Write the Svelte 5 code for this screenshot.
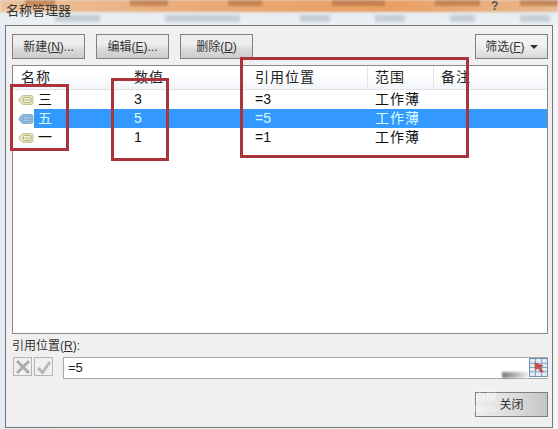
<script>
  const rows = [
    { name: '三', value: '3', ref: '=3', scope: '工作薄', sel: false },
    { name: '五', value: '5', ref: '=5', scope: '工作薄', sel: true },
    { name: '一', value: '1', ref: '=1', scope: '工作薄', sel: false }
  ];
  const topBlots = [[25, 40], [75, 50], [60, 45], [70, 70], [50, 60], [40, 50]];
  const lowBlots = [[55, 45], [65, 75], [60, 30], [45, 30], [45, 25], [45, 30]];
</script>

<div class="window">
  <div class="glass">
    <div class="orange">
      {#each topBlots as b}
        <span class="blot" style="margin-left:{b[0]}px;width:{b[1]}px"></span>
      {/each}
    </div>
    <div class="low">
      {#each lowBlots as b}
        <span class="lowblot" style="margin-left:{b[0]}px;width:{b[1]}px"></span>
      {/each}
    </div>
    <div class="title">名称管理器</div>
    <div class="help">?</div>
  </div>

  <div class="panel">
    <div class="toolbar">
      <button class="btn">新建(<u>N</u>)...</button>
      <button class="btn">编辑(<u>E</u>)...</button>
      <button class="btn">删除(<u>D</u>)</button>
      <button class="btn filter">筛选(<u>F</u>) <span class="caret"></span></button>
    </div>

    <div class="list">
      <div class="head row">
        <span class="c1">名称</span>
        <span>数值</span>
        <span class="ref">引用位置</span>
        <span class="div">范围</span>
        <span class="div">备注</span>
        <span></span>
      </div>
      {#each rows as r}
        <div class="row item">
          <span class="namecell">
            <svg class="tag" viewBox="0 0 16 12" width="16" height="12">
              <path d="M1 6 Q1 5 2 4 L4 2 Q4.6 1.5 6 1.5 H13 Q15 1.5 15 3.5 V8.5 Q15 10.5 13 10.5 H6 Q4.6 10.5 4 10 L2 8 Q1 7 1 6 Z"
                fill={r.sel ? '#8fbcdf' : '#e8e6b4'} stroke={r.sel ? '#86aecb' : '#c4c296'} />
              <rect x="5.5" y="3.5" width="7.5" height="5" rx="1" fill={r.sel ? '#a9cde8' : '#f6f5d8'} stroke={r.sel ? '#6f9cc4' : '#9c9a6a'} stroke-width="0.7" />
              <path d="M6.5 6 H12" stroke={r.sel ? '#5f8fb8' : '#9c9a6a'} stroke-width="0.8" />
            </svg>
            <span class="nm" class:sel={r.sel}>{r.name}</span>
          </span>
          <span class:sel={r.sel} class="latin">{r.value}</span>
          <span class:sel={r.sel} class="latin ref">{r.ref}</span>
          <span class:sel={r.sel} class="scope">{r.scope}</span>
          <span class:sel={r.sel}></span>
          <span class:sel={r.sel}></span>
        </div>
      {/each}
    </div>

    <div class="label">引用位置(<u>R</u>):</div>

    <div class="refbar">
      <span class="sq">
        <svg viewBox="0 0 18 18" width="18" height="18"><path d="M3 3 L15 15 M15 3 L3 15" stroke="#adadad" stroke-width="3" /></svg>
      </span>
      <span class="sq">
        <svg viewBox="0 0 18 18" width="18" height="18"><path d="M3 10 L7.5 14.5 L15 4" stroke="#b8b8b8" stroke-width="3" fill="none" /></svg>
      </span>
      <div class="input">
        <span class="val">=5</span>
        <span class="smudge"></span>
        <span class="picker">
          <svg viewBox="0 0 18 18" width="19" height="19">
            <rect x="0.5" y="0.5" width="17" height="17" fill="#e4edf5" stroke="#6f93b3" />
            <path d="M1 5 H17 M1 9 H17 M1 13 H17 M6 1 V17 M12 1 V17" stroke="#7fa2c0" stroke-width="1" />
            <path d="M5 4 L14 7 L11 9 L14 13 L11 14 L8.5 10 L6 12 Z" fill="#c0504d" />
          </svg>
        </span>
      </div>
    </div>

    <div class="footer">
      <button class="btn close">关闭</button>
    </div>
  </div>

  <div class="mark a"></div>
  <div class="mark b"></div>
  <div class="mark c"></div>
  <div class="wm wm1">百度</div>
  <div class="wm wm2">baidu</div>
</div>

<style>
  :global(body) {
    margin: 0;
    background: #fff;
  }
  .window {
    position: relative;
    width: 558px;
    height: 429px;
    overflow: hidden;
    font-family: "Liberation Sans", "Noto Sans CJK SC", sans-serif;
    background: linear-gradient(90deg, #e4ebf2, #f3f6f9);
    color: #222;
  }
  .glass {
    position: relative;
    height: 25px;
    background: linear-gradient(#dfe7ef, #edf1f5);
  }
  .orange {
    position: absolute;
    inset: 0 0 auto 0;
    height: 12px;
    display: flex;
    background: linear-gradient(90deg, #ecc29c, #eaa873 40%, #ea9f62 70%, #e9b98f);
    filter: blur(1.2px);
  }
  .blot {
    height: 6px;
    background: #b9784a;
    opacity: 0.75;
  }
  .low {
    position: absolute;
    left: 0;
    right: 0;
    top: 15px;
    display: flex;
    filter: blur(1.5px);
  }
  .lowblot {
    height: 7px;
    background: #c6ced6;
  }
  .title {
    position: relative;
    padding: 3px 0 0 6px;
    font-size: 13px;
    line-height: 16px;
    color: #333;
  }
  .help {
    position: absolute;
    left: 491px;
    top: 0;
    font-size: 12px;
    line-height: 13px;
    font-weight: bold;
    color: #555;
  }
  .panel {
    box-sizing: border-box;
    height: 403px;
    margin: 0 5px;
    padding: 8px 4px 0 6px;
    background: #f0f0f0;
    border: 1px solid #777;
  }
  .toolbar {
    display: flex;
    gap: 11px;
    height: 25px;
  }
  .btn {
    box-sizing: border-box;
    width: 73px;
    height: 25px;
    padding: 0;
    font: 12px/1 "Liberation Sans", "Noto Sans CJK SC", sans-serif;
    color: #333;
    background: linear-gradient(#eeeeee 40%, #dcdcdc 60%, #cdcdcd);
    border: 1px solid #808080;
  }
  .filter {
    margin-left: auto;
    background: linear-gradient(#f2f2f2 40%, #d8d8d8);
  }
  .caret {
    display: inline-block;
    margin-left: 2px;
    border: 4px solid transparent;
    border-top: 4px solid #333;
    border-bottom: 0;
    vertical-align: 2px;
  }
  .list {
    box-sizing: border-box;
    height: 269px;
    margin-top: 6px;
    background: #fff;
    border: 1px solid #8a8a8a;
  }
  .row {
    display: grid;
    grid-template-columns: 121px 120px 113px 66px 66px 1fr;
  }
  .head {
    height: 23px;
    font-size: 14px;
    line-height: 23px;
    color: #222;
    background: linear-gradient(#fff 40%, #f1f4f8);
    border-bottom: 1px solid #dfe3e8;
    letter-spacing: 1px;
  }
  .head .c1 {
    padding-left: 8px;
  }
  .head .div {
    padding-left: 7px;
    border-left: 1px solid #e2e5ea;
  }
  .item {
    height: 19px;
    font-size: 14px;
    line-height: 19px;
    color: #111;
  }
  .ref {
    padding-left: 1px;
  }
  .namecell {
    display: flex;
    align-items: center;
    padding-left: 5px;
  }
  .tag {
    flex: none;
  }
  .nm {
    display: block;
    flex: 1;
    height: 19px;
    padding-left: 4px;
  }
  .latin {
    font-size: 14px;
  }
  .scope {
    padding-left: 8px;
    letter-spacing: 1px;
    white-space: nowrap;
  }
  .sel {
    background: #3399ff;
    color: #d8ffff;
  }
  .label {
    margin-top: 5px;
    font-size: 12px;
    line-height: 14px;
    color: #333;
  }
  .refbar {
    display: flex;
    align-items: flex-start;
    margin-top: 4px;
    margin-left: 1px;
    height: 22px;
  }
  .sq {
    box-sizing: border-box;
    width: 19px;
    height: 19px;
    margin-right: 2px;
    border: 1px solid #b5b5b5;
    line-height: 0;
  }
  .input {
    position: relative;
    display: flex;
    align-items: flex-start;
    justify-content: space-between;
    box-sizing: border-box;
    flex: 1;
    height: 22px;
    margin-left: 8px;
    background: #fff;
    border: 1px solid #a8a8a8;
    border-right: 0;
  }
  .val {
    padding-left: 4px;
    font-size: 13px;
    line-height: 20px;
  }
  .smudge {
    position: absolute;
    right: 20px;
    bottom: 0;
    width: 26px;
    height: 6px;
    background: linear-gradient(90deg, #777, #eee);
    filter: blur(1px);
  }
  .picker {
    width: 19px;
    height: 19px;
    line-height: 0;
  }
  .footer {
    display: flex;
    justify-content: flex-end;
    margin-top: 13px;
  }
  .close {
    background: linear-gradient(90deg, #eeeeee, #dadada 60%, #c4c4c4);
    font-size: 12px;
  }
  .mark {
    position: absolute;
    box-sizing: border-box;
    border: 3px solid #ab333b;
    pointer-events: none;
  }
  .a {
    left: 10px;
    top: 84px;
    width: 59px;
    height: 67px;
  }
  .b {
    left: 111px;
    top: 78px;
    width: 58px;
    height: 83px;
  }
  .c {
    left: 240px;
    top: 57px;
    width: 229px;
    height: 101px;
  }
  .wm {
    position: absolute;
    color: #fff;
    opacity: 0.55;
    pointer-events: none;
    white-space: nowrap;
  }
  .wm1 {
    left: 474px;
    top: 389px;
    font-size: 12px;
    line-height: 14px;
  }
  .wm2 {
    left: 474px;
    top: 404px;
    font-size: 9px;
    line-height: 11px;
  }
</style>
